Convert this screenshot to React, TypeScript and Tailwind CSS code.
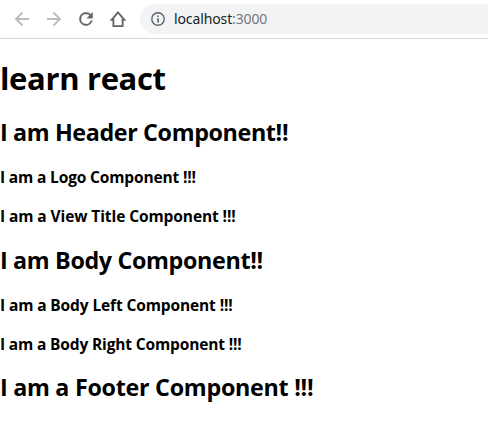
import React from "react";

function Toolbar() {
  return (
    <header className="flex h-[39px] items-start border-b border-[#d5d6d8] bg-white">
      <div className="flex h-[38px] w-[140px] shrink-0 items-center gap-3 pl-3">
        <svg className="size-5 shrink-0" viewBox="0 0 20 20" fill="none" stroke="#babcbe" strokeWidth="1.9">
          <path d="M17 10H4M10.5 3.5 4 10l6.5 6.5" />
        </svg>
        <svg className="size-5 shrink-0" viewBox="0 0 20 20" fill="none" stroke="#babcbe" strokeWidth="1.9">
          <path d="M3 10h13M9.5 3.5 16 10l-6.5 6.5" />
        </svg>
        <svg className="size-5 shrink-0" viewBox="0 0 24 24" fill="#5f6368" stroke="#5f6368" strokeWidth="0.4">
          <path d="M17.65 6.35A7.96 7.96 0 0 0 12 4a8 8 0 1 0 7.73 10h-2.08A6 6 0 1 1 12 6c1.66 0 3.14.69 4.22 1.78L13 11h7V4z" />
        </svg>
        <svg className="size-5 shrink-0" viewBox="0 0 20 20" fill="none" stroke="#5f6368" strokeWidth="1.8">
          <path d="M3.6 10.9h1.8v6.2h9.2v-6.2h1.8L10 3.5z" />
        </svg>
      </div>
      <div className="mt-1 flex h-[30px] flex-1 items-center rounded-l-full bg-[#f1f3f4] pl-[11px]">
        <svg className="size-[14px] shrink-0" viewBox="0 0 14 14" fill="none" stroke="#5f6368" strokeWidth="1.4">
          <circle cx="7" cy="7" r="6.2" />
          <path d="M7 6.2v4.3M7 3.4v1.5" strokeWidth="1.6" />
        </svg>
        <span className="ml-[9px] font-['Noto_Sans',sans-serif] text-[14px] leading-[20px] tracking-[-0.12px] text-[#202124]">
          localhost<span className="text-[#74787c]">:3000</span>
        </span>
      </div>
    </header>
  );
}

function Header() {
  return (
    <section>
      <h2 className="h-[51px] text-[23.3px] leading-[32px] tracking-[-0.37px]">I am Header Component!!</h2>
      <h4 className="h-[39px] text-[15.5px] leading-[20px] tracking-[-0.15px]">I am a Logo Component !!!</h4>
      <h4 className="h-[38px] text-[15.5px] leading-[20px] tracking-[-0.09px]">I am a View Title Component !!!</h4>
    </section>
  );
}

function Body() {
  return (
    <section>
      <h2 className="h-[51px] text-[23.3px] leading-[32px] tracking-[-0.34px]">I am Body Component!!</h2>
      <h4 className="h-[39px] text-[15.5px] leading-[20px] tracking-[-0.12px]">I am a Body Left Component !!!</h4>
      <h4 className="h-[37px] text-[15.5px] leading-[20px] tracking-[-0.15px]">I am a Body Right Component !!!</h4>
    </section>
  );
}

function Footer() {
  return <h2 className="text-[23.3px] leading-[32px] tracking-[-0.28px]">I am a Footer Component !!!</h2>;
}

export default function App() {
  return (
    <div className="h-[424px] overflow-hidden bg-white font-['Open_Sans','Noto_Sans',sans-serif] text-black">
      <Toolbar />
      <main className="pt-[18px] font-bold whitespace-nowrap">
        <h1 className="h-[59px] text-[31px] leading-[42px] tracking-[-0.35px]">learn react</h1>
        <Header />
        <Body />
        <Footer />
      </main>
    </div>
  );
}
